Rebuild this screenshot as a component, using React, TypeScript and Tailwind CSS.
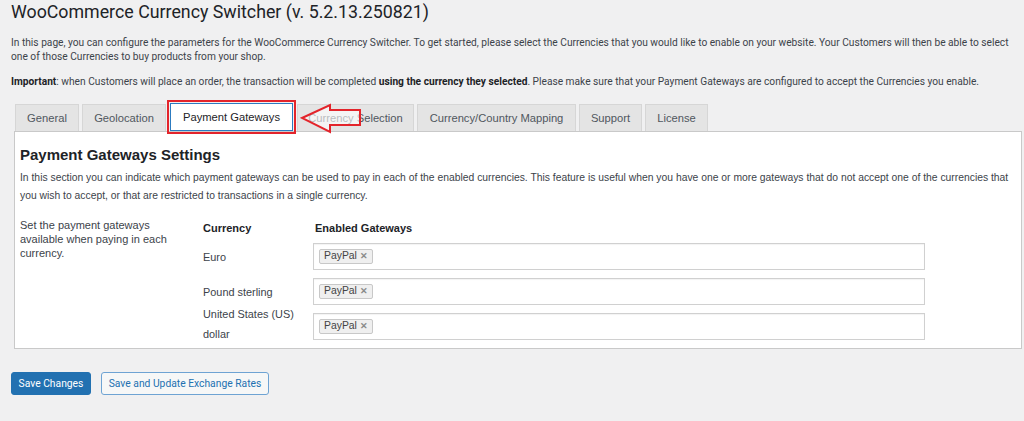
import React from "react";

const TABS = [
  { label: "General", w: "w-[64px]" },
  { label: "Geolocation", w: "w-[84px]" },
  { label: "Payment Gateways", w: "w-[123px]", active: true },
  { label: "Currency Selection", w: "w-[117px]" },
  { label: "Currency/Country Mapping", w: "w-[159px]" },
  { label: "Support", w: "w-[63px]" },
  { label: "License", w: "w-[63px]" },
];

const ROWS = [
  { name: "Euro", shift: "" },
  { name: "Pound sterling", shift: "" },
  { name: "United States (US) dollar", shift: "relative -top-[3px]" },
];

const segoe = "font-['Roboto','Open_Sans',sans-serif]";
const arial = "font-['Liberation_Sans',Arial,sans-serif]";

function Chip() {
  return (
    <span className="inline-flex h-[15px] items-center gap-[3px] rounded-[2px] border border-[#c8c8c8] bg-[#efefef] px-[4px] text-[10.4px] leading-none text-[#444]">
      PayPal
      <span className="text-[9px] font-bold text-[#8a8a8a]">✕</span>
    </span>
  );
}

function Arrow() {
  return (
    <svg
      className="pointer-events-none absolute left-[300px] top-[103px]"
      width="64"
      height="32"
      viewBox="0 0 64 32"
    >
      <path
        d="M2 15 L30 2 L30 7 L60 7 L60 22 L30 22 L30 29 Z"
        fill="rgba(255,255,255,0.6)"
        stroke="#e3242b"
        strokeWidth="2"
      />
    </svg>
  );
}

export default function App() {
  return (
    <div className={`relative h-[421px] w-[1024px] overflow-hidden bg-[#f0f0f1] ${segoe}`}>
      <h1 className="px-[11px] text-[17.8px] leading-[24px] text-[#1d2327]">
        WooCommerce Currency Switcher (v. 5.2.13.250821)
      </h1>
      <div className="pl-[11px] pr-[5px] pt-[12px] text-[10.2px] leading-[14px] text-[#3c434a]">
        <p>
          In this page, you can configure the parameters for the WooCommerce Currency Switcher. To get started, please select the Currencies that you would like to enable on your website. Your Customers will then be able to select one of those Currencies to buy products from your shop.
        </p>
        <p className="mt-[11px]">
          <b className="text-[#1d2327]">Important</b>: when Customers will place an order, the transaction will be completed{" "}
          <b className="text-[#1d2327]">using the currency they selected</b>. Please make sure that your Payment Gateways are configured to accept the Currencies you enable.
        </p>
      </div>

      <div className={`mt-[15px] flex h-[27px] items-end gap-[3px] pl-[15px] ${arial}`}>
        {TABS.map((t) =>
          t.active ? (
            <div key={t.label} className="relative mx-[1px] self-stretch">
              <div className="pointer-events-none absolute -left-[3px] -right-[3px] -top-[4px] -bottom-[3px] border-2 border-[#e3242b]" />
              <div className={`relative -top-px flex h-[28px] items-center justify-center border border-[#2c7bc0] bg-white text-[11.2px] text-[#1d2327] ${t.w}`}>
                {t.label}
              </div>
            </div>
          ) : (
            <div
              key={t.label}
              className={`flex h-[27px] items-center justify-center border border-b-0 border-[#d6d6d6] bg-[#e4e4e4] text-[11.2px] text-[#50575e] ${t.w}`}
            >
              {t.label}
            </div>
          )
        )}
      </div>
      <Arrow />

      <div className={`ml-[14px] w-[1008px] border border-[#c9c9c9] bg-white pb-[8px] pl-[5px] pr-[6px] pt-[14px] ${arial}`}>
        <h2 className="text-[15px] font-bold leading-[18px] text-[#1d2327]">Payment Gateways Settings</h2>
        <p className="mt-[5px] text-[10.35px] leading-[18px] text-[#3c434a]">
          In this section you can indicate which payment gateways can be used to pay in each of the enabled currencies. This feature is useful when you have one or more gateways that do not accept one of the currencies that you wish to accept, or that are restricted to transactions in a single currency.
        </p>
        <div className="mt-[13px] flex">
          <div className="w-[183px] pr-[20px] text-[11px] leading-[14px] text-[#3c434a]">
            Set the payment gateways available when paying in each currency.
          </div>
          <div className="flex-1 pt-[3px]">
            <div className="flex text-[11px] font-bold leading-[14px] text-[#1d2327]">
              <div className="w-[112px]">Currency</div>
              <div>Enabled Gateways</div>
            </div>
            <div className="mt-[8px] flex flex-col gap-[8px]">
              {ROWS.map((r) => (
                <div key={r.name} className="flex h-[27px] items-center">
                  <div className={`w-[110px] pr-[8px] text-[10.9px] leading-[20px] text-[#3c434a] ${r.shift}`}>{r.name}</div>
                  <div className="flex h-[27px] w-[612px] items-center border border-[#d0d0d0] bg-white px-[5px] shadow-[inset_0_1px_1px_rgba(0,0,0,0.05)]">
                    <Chip />
                  </div>
                </div>
              ))}
            </div>
          </div>
        </div>
      </div>

      <div className="mt-[23px] flex gap-[10px] px-[11px] text-[10.3px]">
        <button className="h-[23px] w-[80px] rounded-[3px] border border-[#2271b1] bg-[#2271b1] text-white">
          Save Changes
        </button>
        <button className="h-[23px] w-[168px] rounded-[3px] border border-[#6ea3d3] bg-[#f6f7f7] text-[#2271b1]">
          Save and Update Exchange Rates
        </button>
      </div>
    </div>
  );
}
